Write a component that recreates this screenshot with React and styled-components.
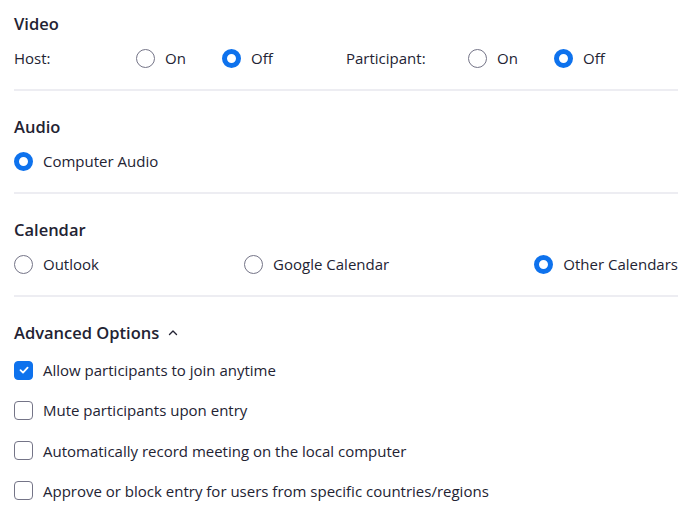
import React from 'react'
import styled, { createGlobalStyle } from 'styled-components'

const GlobalStyle = createGlobalStyle`
	body {
		margin: 0;
		background: #fff;
		font-family: "Open Sans", "Noto Sans", sans-serif;
		color: #232333;
	}
`

function Radio({ checked, label }) {
	return (
		<RadioLabel>
			<RadioDot $checked={checked} />
			{label}
		</RadioLabel>
	)
}

function Check({ checked, label }) {
	return (
		<CheckRow>
			<CheckBox $checked={checked}>
				{checked && (
					<svg width="12" height="12" viewBox="0 0 12 12">
						<path d="M2.5 6.2 L5 8.6 L9.6 3.6" fill="none" stroke="#fff" strokeWidth="1.8" strokeLinecap="round" strokeLinejoin="round" />
					</svg>
				)}
			</CheckBox>
			{label}
		</CheckRow>
	)
}

function App() {
	return (
		<Page>
			<GlobalStyle />

			<Section>
				<Title>Video</Title>
				<VideoGrid>
					<Field>
						<FieldLabel>Host:</FieldLabel>
						<Radio label="On" />
						<Radio label="Off" checked />
					</Field>
					<Field>
						<FieldLabel>Participant:</FieldLabel>
						<Radio label="On" />
						<Radio label="Off" checked />
					</Field>
				</VideoGrid>
			</Section>

			<Section>
				<Title>Audio</Title>
				<Options>
					<Radio label="Computer Audio" checked />
				</Options>
			</Section>

			<Section>
				<Title>Calendar</Title>
				<Options $spread>
					<Radio label="Outlook" />
					<Radio label="Google Calendar" />
					<Radio label="Other Calendars" checked />
				</Options>
			</Section>

			<Advanced>
				<Title>
					Advanced Options
					<svg width="12" height="12" viewBox="0 0 12 12">
						<path d="M2.5 7.5 L6 4 L9.5 7.5" fill="none" stroke="#232333" strokeWidth="1.4" strokeLinecap="round" strokeLinejoin="round" />
					</svg>
				</Title>
				<CheckList>
					<Check label="Allow participants to join anytime" checked />
					<Check label="Mute participants upon entry" />
					<Check label="Automatically record meeting on the local computer" />
					<Check label="Approve or block entry for users from specific countries/regions" />
				</CheckList>
			</Advanced>
		</Page>
	)
}

export default App

const Page = styled.div`
	width: 664px;
	padding: 12px 14px 0;
	font-size: 15px;
`

const Section = styled.section`
	border-bottom: 2px solid #ededf2;
	padding-bottom: 20px;
	margin-bottom: 24px;
`

const Advanced = styled.section``

const Title = styled.h3`
	display: flex;
	align-items: center;
	gap: 8px;
	margin: 0 0 11px;
	font-size: 16.5px;
	font-weight: 600;
	line-height: 24px;
`

const VideoGrid = styled.div`
	display: grid;
	grid-template-columns: 1fr 1fr;
`

const Field = styled.div`
	display: grid;
	grid-template-columns: 122px 86px auto;
	align-items: center;
`

const FieldLabel = styled.span`
	line-height: 22px;
`

const Options = styled.div`
	display: flex;
	justify-content: ${p => (p.$spread ? 'space-between' : 'flex-start')};
`

const RadioLabel = styled.label`
	display: flex;
	align-items: center;
	gap: 10px;
	line-height: 22px;
	white-space: nowrap;
`

const RadioDot = styled.span`
	box-sizing: border-box;
	width: 19px;
	height: 19px;
	border-radius: 50%;
	background: #fff;
	border: ${p => (p.$checked ? '5.5px solid #0e72ed' : '1px solid #747487')};
	flex: none;
`

const CheckList = styled.div`
	display: flex;
	flex-direction: column;
	gap: 18.3px;
	margin-top: 14px;
`

const CheckRow = styled.label`
	display: flex;
	align-items: center;
	gap: 10px;
	line-height: 22px;
`

const CheckBox = styled.span`
	box-sizing: border-box;
	width: 19px;
	height: 19px;
	border-radius: 4px;
	flex: none;
	display: flex;
	align-items: center;
	justify-content: center;
	background: ${p => (p.$checked ? '#0e72ed' : '#fff')};
	border: 1px solid ${p => (p.$checked ? '#0e72ed' : '#747487')};
`
